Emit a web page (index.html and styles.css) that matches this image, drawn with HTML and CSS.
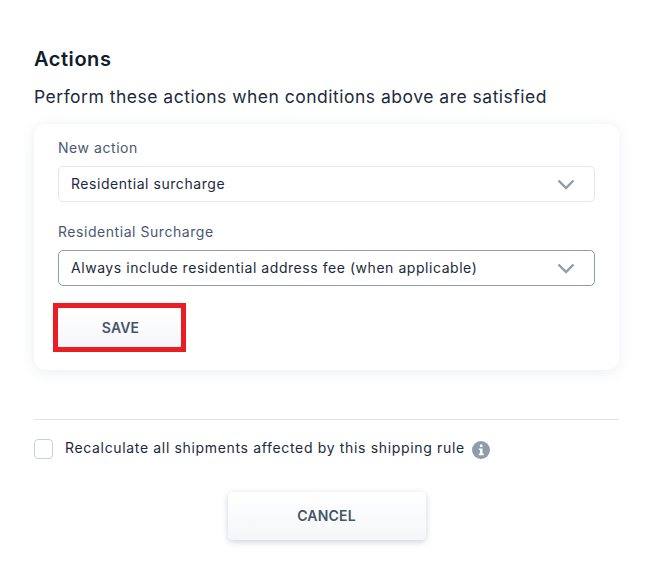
FILE: index.html
```html
<!DOCTYPE html>
<html lang="en">
<head>
    <meta charset="UTF-8">
    <meta name="viewport" content="width=device-width, initial-scale=1.0">
    <title>Actions</title>
    <link rel="stylesheet" href="styles.css">
</head>
<body>
    <div class="page">
        <h2 class="title">Actions</h2>
        <p class="subtitle">Perform these actions when conditions above are satisfied</p>
        <div class="card">
            <label class="field-label">New action</label>
            <div class="select">
                <span>Residential surcharge</span>
                <svg class="chevron" width="18" height="11" viewBox="0 0 18 11"><path d="M1.5 1.5 9 9l7.5-7.5" fill="none" stroke="#8f9cab" stroke-width="2.4"/></svg>
            </div>
            <label class="field-label second">Residential Surcharge</label>
            <div class="select focused">
                <span>Always include residential address fee (when applicable)</span>
                <svg class="chevron" width="18" height="11" viewBox="0 0 18 11"><path d="M1.5 1.5 9 9l7.5-7.5" fill="none" stroke="#8f9cab" stroke-width="2.4"/></svg>
            </div>
            <div class="save-wrap">
                <button class="btn btn-save">SAVE</button>
                <div class="highlight"></div>
            </div>
        </div>
        <hr class="divider">
        <div class="recalc">
            <span class="checkbox"></span>
            <span class="recalc-text">Recalculate all shipments affected by this shipping rule</span>
            <svg class="info" width="18" height="18" viewBox="0 0 18 18"><circle cx="9" cy="9" r="9" fill="#8f9cab"/><rect x="7.8" y="3.4" width="2.8" height="2.6" rx="1" fill="#fff"/><path d="M6.8 7.4h3.7v5.2h1.2v1.6H6.8v-1.6H8V9H6.8z" fill="#fff"/></svg>
        </div>
        <div class="footer">
            <button class="btn btn-cancel">CANCEL</button>
        </div>
    </div>
</body>
</html>
```

FILE: styles.css
```css
* {
    box-sizing: border-box;
}
body {
    margin: 0;
    background-color: #fff;
    font-family: Inter, "Open Sans", sans-serif;
    color: #1b2a3d;
}
.page {
    padding: 47px 29px 26px 34px;
}
.title {
    margin: 0;
    font-size: 20px;
    line-height: 24px;
    font-weight: 600;
    letter-spacing: 0.55px;
    color: #101d2d;
}
.subtitle {
    margin: 15px 0 0;
    font-size: 17.5px;
    line-height: 22px;
    letter-spacing: 0.5px;
}
.card {
    margin-top: 16px;
    height: 246px;
    padding: 15px 24px 0;
    background-color: #fff;
    border-radius: 12px;
    box-shadow: 0 2px 14px rgba(90, 110, 140, 0.12);
}
.field-label {
    display: block;
    font-size: 14px;
    line-height: 18px;
    letter-spacing: 0.55px;
    color: #4a5872;
}
.field-label.second {
    margin-top: 21px;
}
.select {
    display: flex;
    justify-content: space-between;
    align-items: center;
    height: 36px;
    margin-top: 9px;
    padding: 0 19px 0 12px;
    border: 1px solid #e4e6ec;
    border-radius: 5px;
    font-size: 14px;
    letter-spacing: 0.55px;
}
.select span {
    margin-bottom: 1px;
}
.select.focused {
    border-color: #8f9cab;
}
.save-wrap {
    position: relative;
    width: 124px;
    margin-top: 22px;
}
.btn {
    display: block;
    border: 0;
    border-radius: 5px;
    background: linear-gradient(#fff, #f4f6f9);
    font-family: inherit;
    font-size: 14px;
    font-weight: 600;
    letter-spacing: 0.2px;
    color: #465468;
}
.btn-save {
    width: 124px;
    height: 39px;
    padding-right: 5px;
    box-shadow: 0 1px 3px rgba(90, 110, 140, 0.3);
}
.highlight {
    position: absolute;
    left: -5px;
    top: -5px;
    width: 133px;
    height: 49px;
    border: 5px solid #ec1c24;
}
.divider {
    margin: 49px 0 0;
    border: 0;
    border-top: 1px solid #e2e4e8;
}
.recalc {
    display: flex;
    align-items: center;
    margin-top: 19px;
    font-size: 14px;
    letter-spacing: 0.66px;
}
.checkbox {
    width: 19px;
    height: 20px;
    border: 1px solid #c9d1dc;
    border-radius: 4px;
}
.recalc-text {
    margin: 0 0 3px 12px;
}
.info {
    margin-left: 7px;
    margin-top: 1px;
}
.footer {
    display: flex;
    justify-content: center;
    margin-top: 33px;
}
.btn-cancel {
    width: 198px;
    height: 48px;
    padding-bottom: 3px;
    box-shadow: 0 2px 6px rgba(90, 110, 140, 0.3);
}
```
